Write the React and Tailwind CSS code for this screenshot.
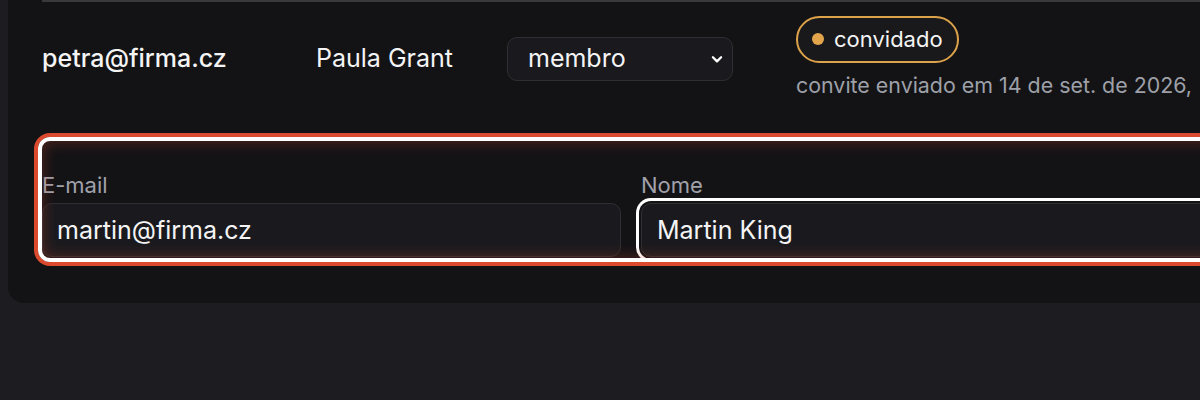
import React from "react";

function Chevron() {
  return (
    <svg width="14" height="14" viewBox="0 0 24 24" fill="none" stroke="white" strokeWidth="4" strokeLinecap="round" strokeLinejoin="round">
      <path d="M5 9l7 7 7-7" />
    </svg>
  );
}

export default function App() {
  return (
    <div className="w-[1200px] h-[400px] overflow-hidden bg-[#1c1c21] font-['Inter',sans-serif] text-[#f4f4f5]">
      <div className="ml-2 w-[1246px] rounded-bl-2xl bg-[#131316] px-[34px] pb-[41px]">
        <div className="flex h-[116px] items-center border-t-2 border-[#38383d]">
          <div className="w-[274px] shrink-0 text-[25px] font-medium">petra@firma.cz</div>
          <div className="w-[191px] shrink-0 text-[25px]">Paula Grant</div>
          <div className="relative mr-[63px] w-[226px] shrink-0">
            <select className="h-[44px] w-full appearance-none rounded-[10px] border border-[#2e2e33] bg-[#1a1a1e] pl-[20px] text-[25px] text-[#f4f4f5] outline-none">
              <option>membro</option>
            </select>
            <div className="pointer-events-none absolute right-[9px] top-1/2 -translate-y-1/2">
              <Chevron />
            </div>
          </div>
          <div className="flex shrink-0 flex-col items-start gap-[8px] -mt-[4px]">
            <div className="flex h-[47px] items-center gap-[10px] rounded-full border-2 border-[#dca24a] bg-[#19191b] pl-[14px] pr-[14px] text-[22px]">
              <span className="h-[12px] w-[12px] rounded-full bg-[#e3a54c]" />
              <span>convidado</span>
            </div>
            <div className="whitespace-nowrap text-[21.4px] leading-[28px] text-[#9ea0a8]">convite enviado em 14 de set. de 2026,</div>
          </div>
        </div>
        <div className="relative mt-[21px] -mx-1 h-[125px] rounded-[12px] px-1 pt-[34px] shadow-[0_0_0_4px_#db4a2c]">
          <div className="grid grid-cols-2 gap-5">
            <label className="flex flex-col">
              <span className="mb-[4px] text-[22px] leading-[28px] text-[#a1a1aa]">E-mail</span>
              <input
                readOnly
                value="martin@firma.cz"
                className="h-[54px] rounded-[10px] border border-[#2e2e33] bg-[#1a1a1e] px-[14px] text-[25px] text-[#f4f4f5] outline-none"
              />
            </label>
            <label className="flex flex-col">
              <span className="mb-[4px] text-[22px] leading-[28px] text-[#a1a1aa]">Nome</span>
              <input
                readOnly
                value="Martin King"
                className="h-[54px] rounded-[10px] border border-[#2e2e33] bg-[#1a1a1e] px-[15px] text-[25px] text-[#f4f4f5] outline-none shadow-[0_0_0_2px_#131316,0_0_0_5px_#ffffff]"
              />
            </label>
          </div>
          <div className="pointer-events-none absolute inset-0 rounded-[12px] shadow-[inset_0_0_0_4px_#ffffff,inset_0_0_14px_6px_rgba(219,74,44,0.28)]" />
        </div>
      </div>
    </div>
  );
}
